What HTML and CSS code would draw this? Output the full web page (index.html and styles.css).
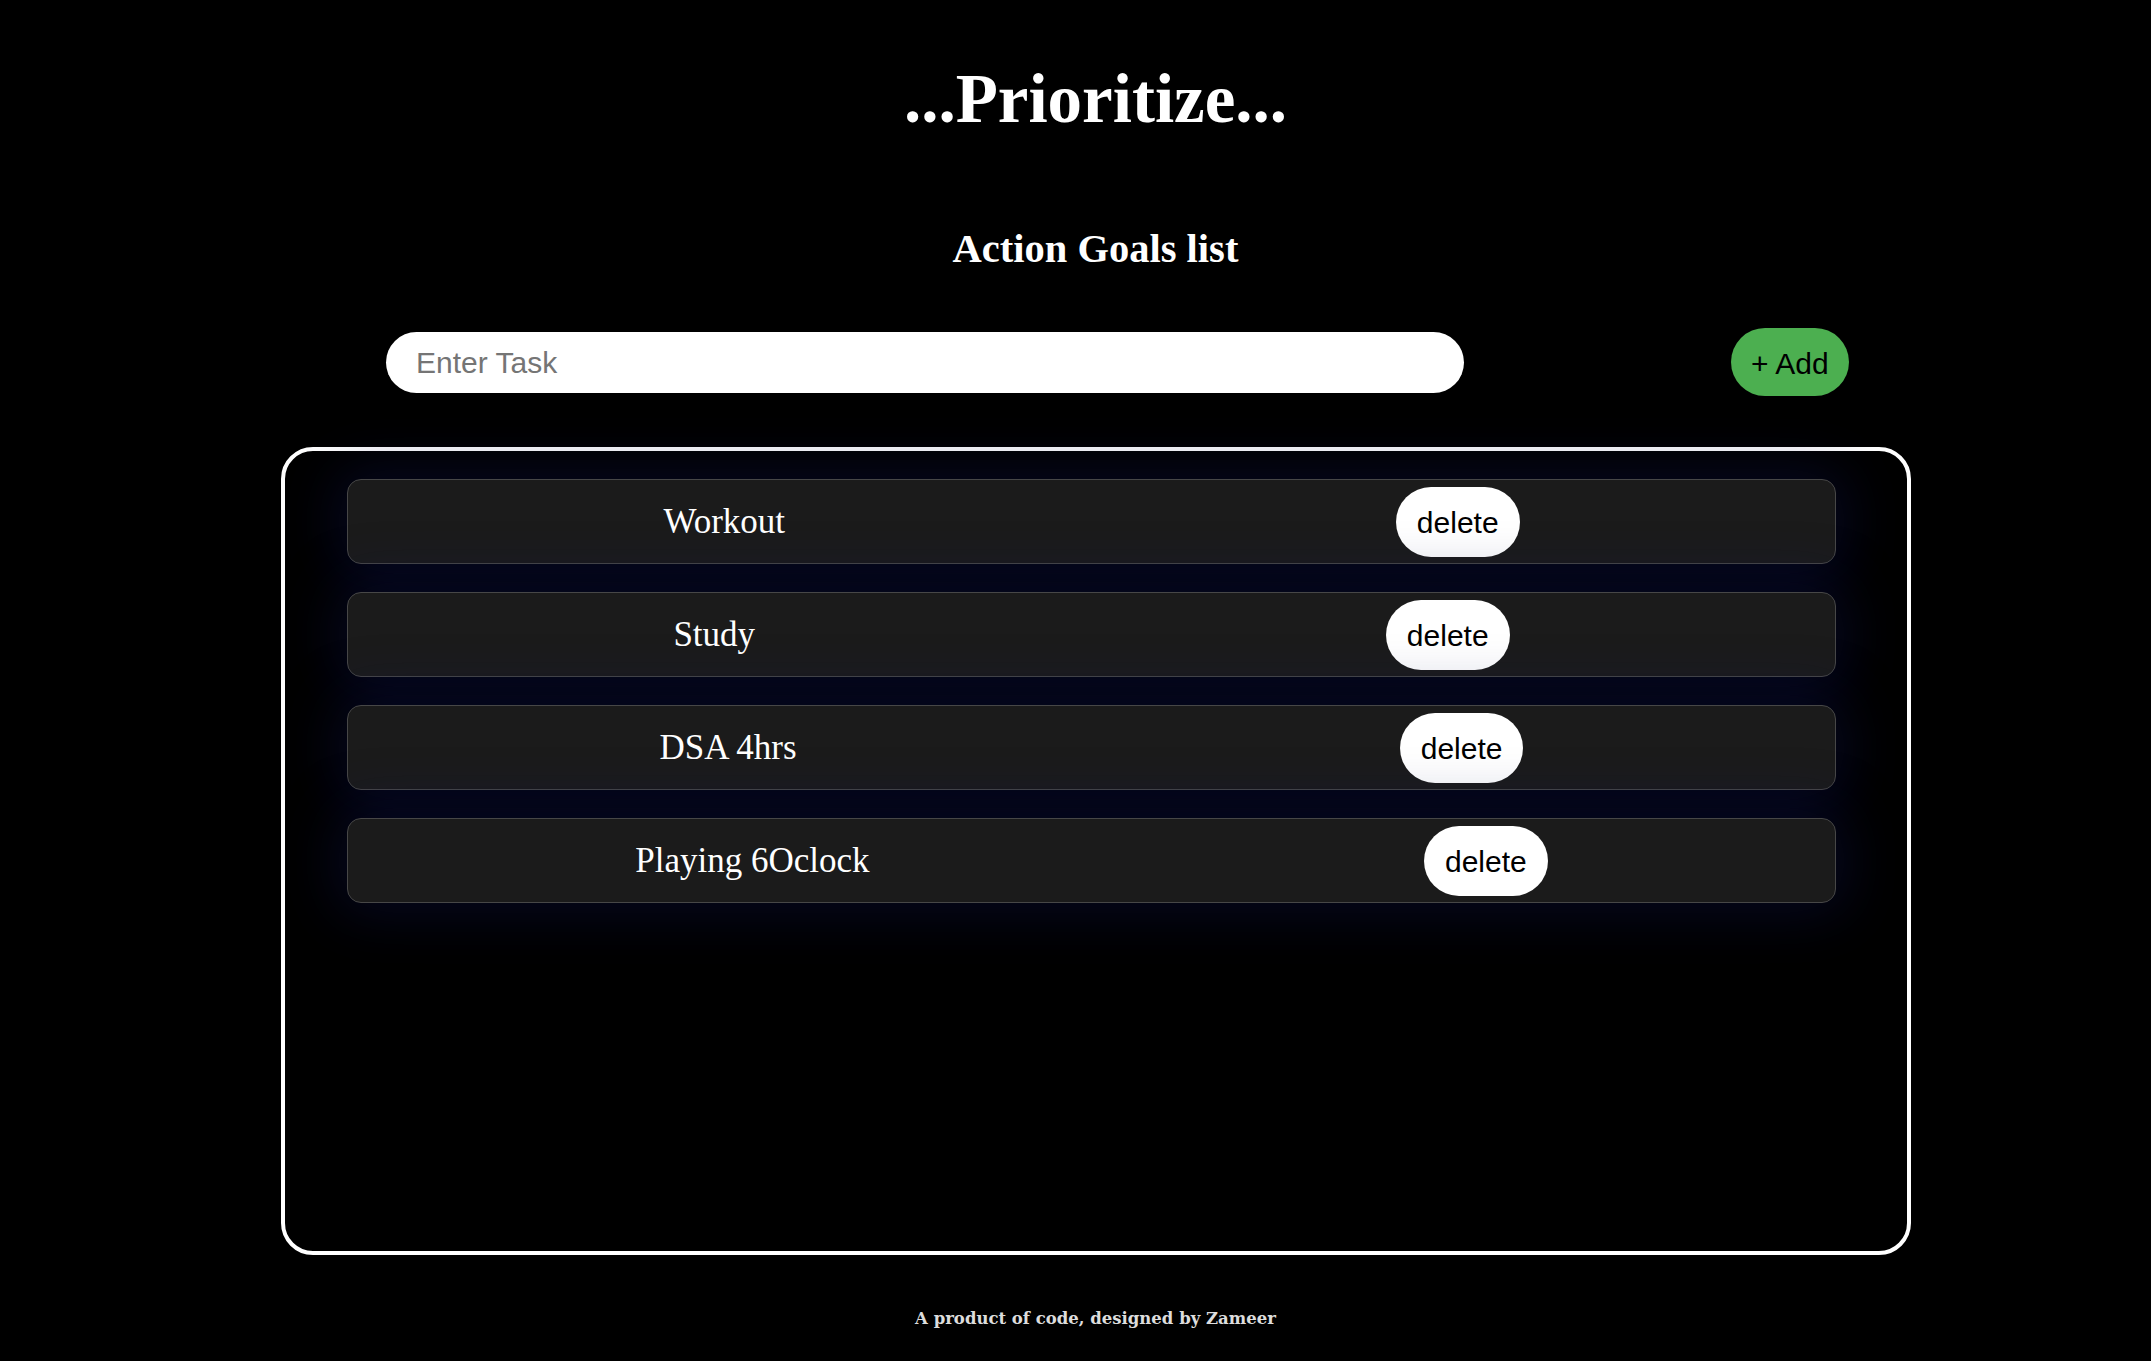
FILE: index.html
```html
<!DOCTYPE html>
<html lang="en">
<head>
<meta charset="UTF-8">
<title>Prioritize</title>
<link rel="stylesheet" href="styles.css">
</head>
<body>
<div class="page">
  <h1 class="title">...Prioritize...</h1>
  <h2 class="subtitle">Action Goals list</h2>
  <div class="input-row">
    <input class="task-input" type="text" placeholder="Enter Task">
    <button class="add-btn">+ Add</button>
  </div>
  <div class="board">
    <ul class="task-list">
      <li class="task"><span class="task-text">Workout</span><button class="del-btn">delete</button></li>
      <li class="task"><span class="task-text">Study</span><button class="del-btn">delete</button></li>
      <li class="task"><span class="task-text">DSA 4hrs</span><button class="del-btn">delete</button></li>
      <li class="task"><span class="task-text">Playing 6Oclock</span><button class="del-btn">delete</button></li>
    </ul>
  </div>
  <p class="footer">A product of code, designed by Zameer</p>
</div>
</body>
</html>
```
FILE: styles.css
```css
html, body {
  margin: 0;
  padding: 0;
  background: #000;
}
body {
  color: #fff;
  font-family: "Liberation Serif", "Times New Roman", serif;
}
.page {
  padding-left: 40px;
  padding-top: 60px;
  padding-bottom: 20px;
}
.title {
  margin: 0;
  text-align: center;
  font-size: 69px;
  font-weight: bold;
  line-height: normal;
}
.subtitle {
  margin: 86px 0 0;
  text-align: center;
  font-size: 40.5px;
  font-weight: bold;
  line-height: normal;
}
.input-row {
  margin-top: 56px;
  display: flex;
  align-items: center;
  padding-left: 346px;
  gap: 267px;
}
.task-input {
  box-sizing: border-box;
  width: 1078px;
  height: 61px;
  border: none;
  outline: none;
  border-radius: 31px;
  background: #fff;
  padding: 2px 30px 0;
  font-family: "Liberation Sans", Arial, sans-serif;
  font-size: 30px;
  color: #000;
}
.task-input::placeholder {
  color: #757575;
}
.add-btn {
  border: none;
  background: #4caf50;
  color: #000;
  font-family: "Liberation Sans", Arial, sans-serif;
  font-size: 30px;
  padding: 19px 20px 15px;
  border-radius: 35px;
  line-height: normal;
}
.board {
  margin: 51px 240px 0 241px;
  height: 800px;
  border: 4px solid #fff;
  border-radius: 32px;
}
.task-list {
  list-style: none;
  margin: 0;
  padding: 28px 0 0 62px;
  display: flex;
  flex-direction: column;
  gap: 28px;
}
.task {
  box-sizing: border-box;
  width: 1489px;
  height: 85px;
  display: flex;
  align-items: center;
  justify-content: space-around;
  padding: 0 10px;
  background: #1b1b1b;
  border: 1px solid #474747;
  border-radius: 14px;
  box-shadow: 0 0 55px 10px rgba(18, 22, 95, 0.34);
}
.task-text {
  font-size: 35px;
  color: #fff;
}
.del-btn {
  border: none;
  background: #fff;
  color: #000;
  font-family: "Liberation Sans", Arial, sans-serif;
  font-size: 30px;
  padding: 19px 21px 17px;
  border-radius: 35px;
  line-height: normal;
}
.footer {
  margin: 54px 0 0;
  text-align: center;
  font-family: "DejaVu Serif", serif;
  font-weight: bold;
  font-size: 16.5px;
  color: #ddd;
}
```
